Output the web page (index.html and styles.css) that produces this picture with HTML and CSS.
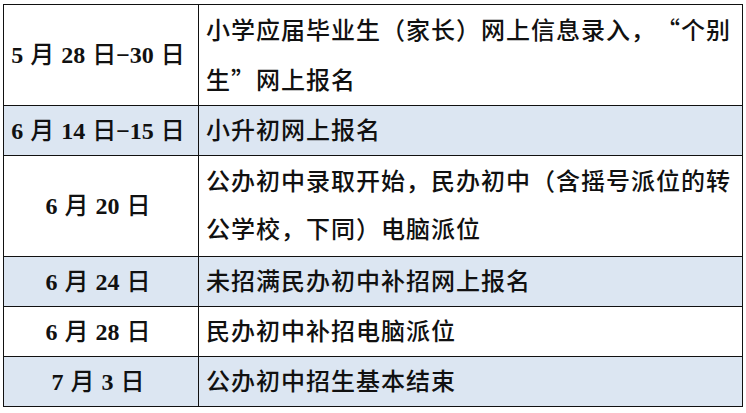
FILE: index.html
```html
<!DOCTYPE html>
<html lang="zh-CN">
<head>
<meta charset="utf-8">
<link rel="stylesheet" href="styles.css">
</head>
<body>
<table class="schedule">
  <tr class="tall">
    <td class="date"><b>5</b> 月 <b>28</b> 日<b>−30</b> 日</td>
    <td class="desc">小学应届毕业生（家长）网上信息录入，<span class="q">“</span>个别<br>生<span class="q">”</span>网上报名</td>
  </tr>
  <tr class="shade">
    <td class="date"><b>6</b> 月 <b>14</b> 日<b>−15</b> 日</td>
    <td class="desc">小升初网上报名</td>
  </tr>
  <tr class="tall">
    <td class="date"><b>6</b> 月 <b>20</b> 日</td>
    <td class="desc">公办初中录取开始，民办初中（含摇号派位的转<br>公学校，下同）电脑派位</td>
  </tr>
  <tr class="shade">
    <td class="date"><b>6</b> 月 <b>24</b> 日</td>
    <td class="desc">未招满民办初中补招网上报名</td>
  </tr>
  <tr>
    <td class="date"><b>6</b> 月 <b>28</b> 日</td>
    <td class="desc">民办初中补招电脑派位</td>
  </tr>
  <tr class="shade">
    <td class="date"><b>7</b> 月 <b>3</b> 日</td>
    <td class="desc">公办初中招生基本结束</td>
  </tr>
</table>
</body>
</html>
```

FILE: styles.css
```css
html, body {
  margin: 0;
  padding: 0;
  background: #ffffff;
}

.schedule {
  margin: 4px 0 0 3px;
  width: 740px;
  border-collapse: collapse;
  table-layout: fixed;
  font-family: "Liberation Serif", "Noto Sans CJK SC", serif;
  font-size: 24px;
  font-weight: 500;
  color: #111;
  text-spacing-trim: space-all;
}

.schedule td {
  border: 1.3px solid #111;
  padding: 0;
  height: 49px;
  vertical-align: middle;
  line-height: 48px;
  white-space: nowrap;
}

.schedule tr.tall td {
  height: 100px;
}

.schedule tr.shade td {
  background: #dce6f2;
}

.date {
  width: 188px;
  text-align: center;
  padding-right: 6px !important;
  word-spacing: 1px;
}

.date b {
  font-weight: 700;
}

.desc {
  padding-left: 7px !important;
  letter-spacing: 1px;
}

.q {
  font-family: "Noto Sans CJK SC", sans-serif;
  font-feature-settings: "fwid" 1;
}
```
